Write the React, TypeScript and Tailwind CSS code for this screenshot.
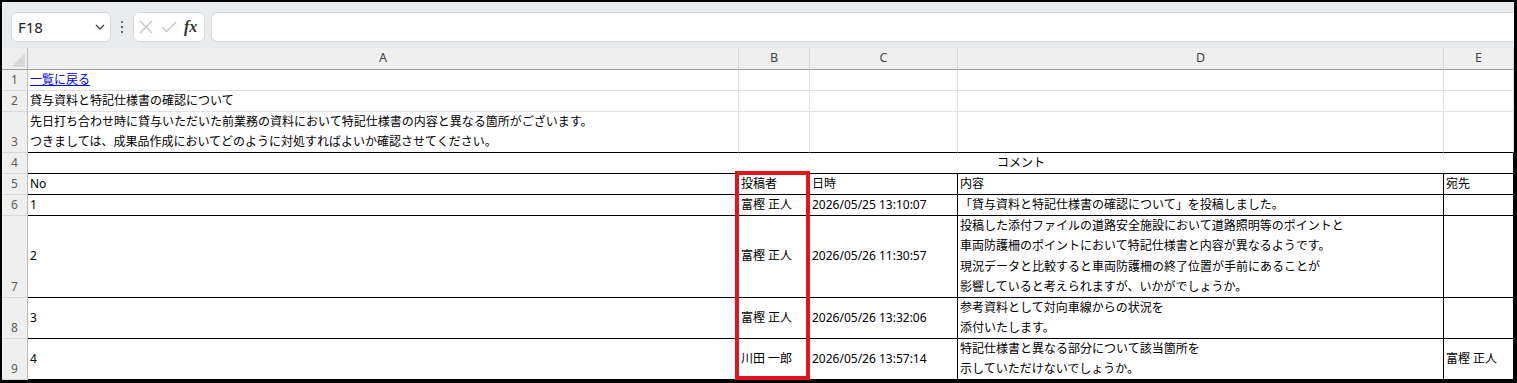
import React from "react";

const FONT = "font-['Noto_Sans','Noto_Sans_CJK_JP',sans-serif]";

type CellProps = { children?: React.ReactNode; className?: string };

function Cell({ children, className = "" }: CellProps) {
  return (
    <div
      className={
        "flex items-center overflow-hidden whitespace-nowrap pl-[2px] border-r border-b text-[12px] leading-[20.3px] text-black " +
        className
      }
    >
      {children}
    </div>
  );
}

function RowHead({ n }: { n: number }) {
  return (
    <div className="flex items-end justify-center bg-[#efefef] border-r border-b border-r-[#bcbcbc] border-b-[#d9d9d9] text-[12px] leading-[16px] pb-[2px] text-[#5f5f5f]">
      {n}
    </div>
  );
}

function ColHead({ label }: { label: string }) {
  return (
    <div className="flex items-center justify-center bg-[#efefef] border-r border-b border-r-[#d6d6d6] border-b-[#9c9c9c] text-[12.5px] text-[#444]">
      {label}
    </div>
  );
}

const G = "border-[#e1e1e1]";
const K = "border-black";

type Row = {
  no: string;
  name: string;
  date: string;
  lines: string[];
  to?: string;
};

const rows: Row[] = [
  {
    no: "1",
    name: "富樫 正人",
    date: "2026/05/25 13:10:07",
    lines: ["「貸与資料と特記仕様書の確認について」を投稿しました。"],
  },
  {
    no: "2",
    name: "富樫 正人",
    date: "2026/05/26 11:30:57",
    lines: [
      "投稿した添付ファイルの道路安全施設において道路照明等のポイントと",
      "車両防護柵のポイントにおいて特記仕様書と内容が異なるようです。",
      "現況データと比較すると車両防護柵の終了位置が手前にあることが",
      "影響していると考えられますが、いかがでしょうか。",
    ],
  },
  {
    no: "3",
    name: "富樫 正人",
    date: "2026/05/26 13:32:06",
    lines: ["参考資料として対向車線からの状況を", "添付いたします。"],
  },
  {
    no: "4",
    name: "川田 一郎",
    date: "2026/05/26 13:57:14",
    lines: ["特記仕様書と異なる部分について該当箇所を", "示していただけないでしょうか。"],
    to: "富樫 正人",
  },
];

export default function App() {
  return (
    <div className={"relative w-[1517px] h-[383px] overflow-hidden bg-black pt-[2px] pl-[2px] pr-[3px] pb-[3px] " + FONT}>
      <div className="flex flex-col w-[1512px] h-[378px] bg-white overflow-hidden">
        {/* toolbar */}
        <div className="flex items-start h-[46px] bg-[#e9ecef] pt-[10px] shrink-0">
          <div className="ml-[9px] w-[100px] h-[30px] bg-white rounded-[6px] border border-[#d9d9d9] flex items-center justify-between pl-[6px] pr-[5px]">
            <span className="text-[15px] text-[#222] leading-none">F18</span>
            <svg width="10" height="6" viewBox="0 0 10 6" fill="none">
              <path d="M1 1L5 5L9 1" stroke="#444" strokeWidth="1.3" />
            </svg>
          </div>
          <div className="w-[22px] h-[30px] flex flex-col items-center justify-center gap-[2.5px]">
            <span className="w-[2.5px] h-[2.5px] bg-[#444] rounded-full" />
            <span className="w-[2.5px] h-[2.5px] bg-[#444] rounded-full" />
            <span className="w-[2.5px] h-[2.5px] bg-[#444] rounded-full" />
          </div>
          <div className="w-[72px] h-[30px] bg-white rounded-[6px] border border-[#d9d9d9] flex items-center pl-[5px] gap-[8px]">
            <svg width="14" height="14" viewBox="0 0 14 14" fill="none">
              <path d="M1 1L13 13M13 1L1 13" stroke="#c6c6c6" strokeWidth="1.3" />
            </svg>
            <svg width="16" height="12" viewBox="0 0 16 12" fill="none">
              <path d="M1 6L5.5 10.5L15 1" stroke="#c6c6c6" strokeWidth="1.3" />
            </svg>
            <span className="font-['Liberation_Serif',serif] italic font-bold text-[16px] leading-none text-[#333] -ml-[1px]">
              fx
            </span>
          </div>
          <div className="ml-[6px] flex-1 h-[30px] bg-white rounded-l-[6px] border border-r-0 border-[#d9d9d9]" />
        </div>

        {/* grid */}
        <div className="grid grid-cols-[26px_711px_71px_148px_486px_70px] grid-rows-[22px_21px_21px_41px_21px_21px_21px_82px_41px_41px]">
          {/* header */}
          <div className="flex items-end justify-end bg-[#efefef] border-r border-b border-r-[#bcbcbc] border-b-[#9c9c9c] pr-[2px] pb-[2px]">
            <svg width="14" height="14" viewBox="0 0 14 14">
              <polygon points="14,0 14,14 0,14" fill="#d9d9d9" />
            </svg>
          </div>
          <ColHead label="A" />
          <ColHead label="B" />
          <ColHead label="C" />
          <ColHead label="D" />
          <ColHead label="E" />

          {/* row 1 */}
          <RowHead n={1} />
          <Cell className={G}>
            <span className="text-[#0000ff] underline">一覧に戻る</span>
          </Cell>
          <Cell className={G} />
          <Cell className={G} />
          <Cell className={G} />
          <Cell className={G} />

          {/* row 2 */}
          <RowHead n={2} />
          <Cell className={G}>貸与資料と特記仕様書の確認について</Cell>
          <Cell className={G} />
          <Cell className={G} />
          <Cell className={G} />
          <Cell className={G} />

          {/* row 3 */}
          <RowHead n={3} />
          <Cell className={"border-r-[#e1e1e1] border-b-black"}>
            <div className="flex flex-col leading-[20px]">
              <span>先日打ち合わせ時に貸与いただいた前業務の資料において特記仕様書の内容と異なる箇所がございます。</span>
              <span>つきましては、成果品作成においてどのように対処すればよいか確認させてください。</span>
            </div>
          </Cell>
          <Cell className={"border-r-[#e1e1e1] border-b-black"} />
          <Cell className={"border-r-[#e1e1e1] border-b-black"} />
          <Cell className={"border-r-[#e1e1e1] border-b-black"} />
          <Cell className={"border-r-[#e1e1e1] border-b-black"} />

          {/* row 4 */}
          <RowHead n={4} />
          <Cell className={"col-span-5 pl-[969px] " + K}>コメント</Cell>

          {/* row 5 */}
          <RowHead n={5} />
          <Cell className={K}>No</Cell>
          <Cell className={K}>投稿者</Cell>
          <Cell className={K}>日時</Cell>
          <Cell className={K}>内容</Cell>
          <Cell className={K}>宛先</Cell>

          {rows.map((r, i) => (
            <React.Fragment key={r.no}>
              <RowHead n={6 + i} />
              <Cell className={K}>{r.no}</Cell>
              <Cell className={K}>{r.name}</Cell>
              <Cell className={K}>{r.date}</Cell>
              <Cell className={K}>
                <div className="flex flex-col">
                  {r.lines.map((l) => (
                    <span key={l}>{l}</span>
                  ))}
                </div>
              </Cell>
              <Cell className={K}>{r.to ?? ""}</Cell>
            </React.Fragment>
          ))}
        </div>
      </div>

      {/* red highlight box */}
      <div className="absolute left-[735px] top-[171px] w-[75px] h-[209px] border-4 border-[#e3141b]" />
    </div>
  );
}
